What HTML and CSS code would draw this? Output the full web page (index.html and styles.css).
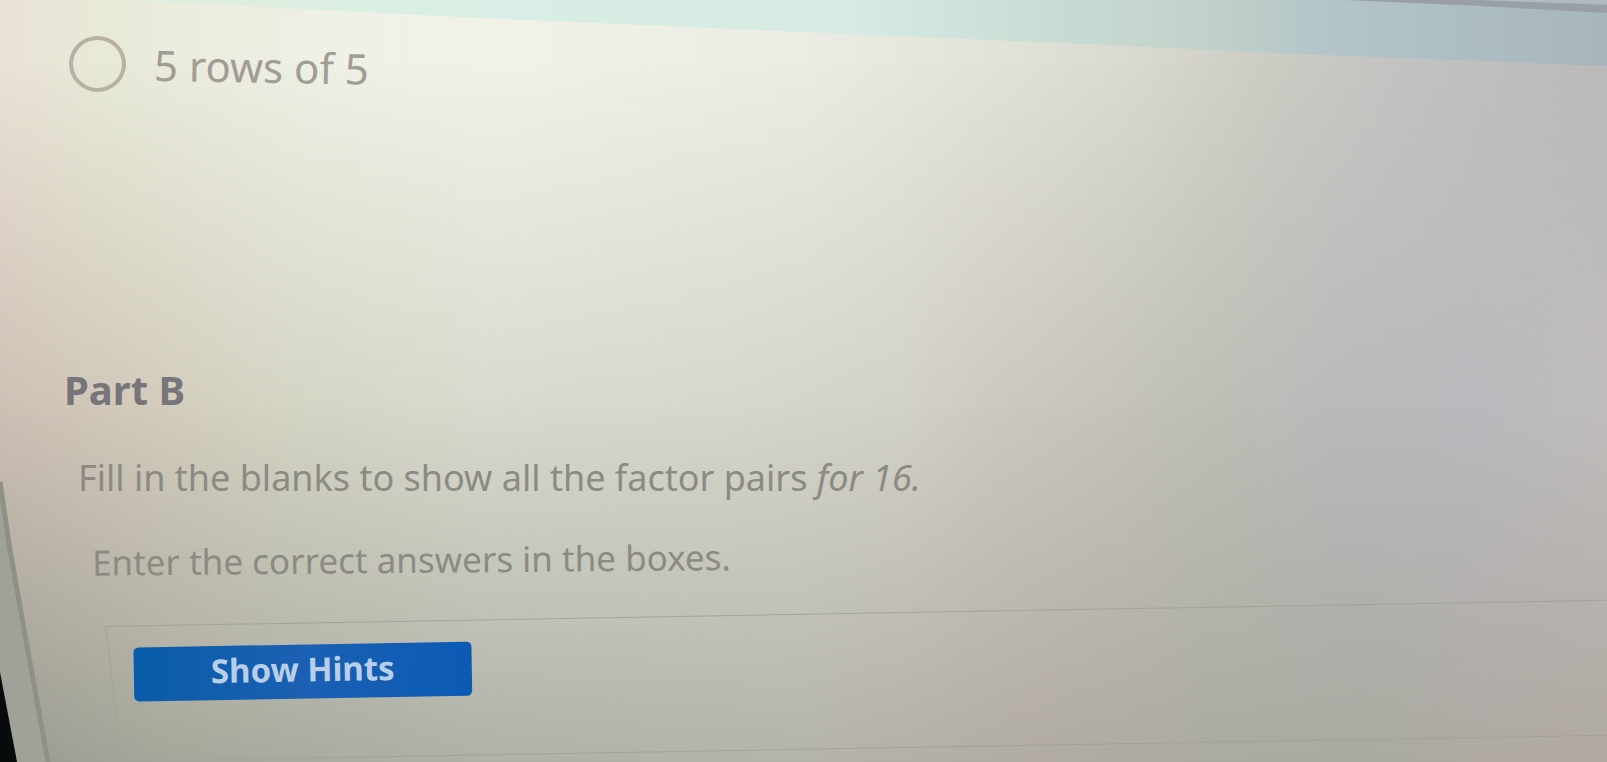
FILE: index.html
```html
<!DOCTYPE html>
<html lang="en">

<head>
    <meta charset="UTF-8" />
    <meta name="viewport" content="width=device-width, initial-scale=1.0">
    <title>Factor pairs</title>
    <link rel="stylesheet" href="styles.css">
</head>

<body>
    <main class="page">
        <!-- top band and screen edge -->
        <svg class="edges" viewBox="0 0 1607 762" preserveAspectRatio="none" aria-hidden="true">
            <defs>
                <linearGradient id="band" x1="0" x2="1" y1="0" y2="0">
                    <stop offset="0" stop-color="#e3ecdc" />
                    <stop offset="0.2" stop-color="#daefe4" />
                    <stop offset="0.5" stop-color="#d5ebe3" />
                    <stop offset="0.75" stop-color="#bfd0c8" />
                    <stop offset="0.8" stop-color="#b5c6ca" />
                    <stop offset="1" stop-color="#a6b6bb" />
                </linearGradient>
            </defs>
            <path d="M90 0H1607V66L1247 52L1107 45L480 18L240 6Z" fill="url(#band)" />
            <path d="M1345 0H1480L1607 5V13L1480 6Z" fill="#989fa8" />
            <path d="M1480 0H1607V4Z" fill="#b3b8c1" />
            <path d="M0 480L10 545L24 630L50 762H0Z" fill="#a0a198" />
            <path d="M0 482L10 550L25 635L48 762" fill="none" stroke="#8f9187" stroke-width="5" />
            <path d="M0 672L17 762H0Z" fill="#080b0b" />
        </svg>

        <label class="option">
            <input type="radio" name="rows">
            <span>5 rows of 5</span>
        </label>

        <section class="part">
            <h2>Part B</h2>
            <p class="question">Fill in the blanks to show all the factor pairs <em>for 16.</em></p>
            <p class="instruction">Enter the correct answers in the boxes.</p>
            <div class="panel">
                <button type="button">Show Hints</button>
            </div>
        </section>
    </main>
</body>

</html>
```

FILE: styles.css
```css
* {
    box-sizing: border-box;
}

body {
    margin: 0;
    font-family: 'Noto Sans', sans-serif;
    color: #8b8b83;
}

.page {
    position: relative;
    z-index: 0;
    min-height: 100vh;
    padding: 34px 0 0 64px;
    overflow: hidden;
    background: linear-gradient(90deg, #eae2d5 0%, #e8ead8 7%, #eff0e6 20%, #f1f1e8 32%, #ebece3 50%, #e1e2d8 62%, #dadad0 70%, #cbcac3 80%, #c3c2c2 88%, #bbb9b9 100%);
}

/* lower rows of the backdrop, faded into the one above */
.page::before,
.page::after {
    content: "";
    position: absolute;
    z-index: -1;
    inset: 0;
}

.page::before {
    background: linear-gradient(90deg, #ccc0b3 0%, #d2cbbb 10%, #d4d4c3 18%, #d8d9ce 30%, #d5d6cc 45%, #d2d1c7 56%, #cdc8bf 62%, #bebeb5 75%, #b9b9bb 83%, #b9b9bd 92%, #bfbcbb 100%);
    -webkit-mask-image: linear-gradient(transparent 8%, #000 54%);
    mask-image: linear-gradient(transparent 8%, #000 54%);
}

.page::after {
    background: linear-gradient(90deg, #999a91 0%, #a5a69b 10%, #afb0a6 30%, #b4b3a9 50%, #b1aba3 65%, #abaaa2 75%, #a8aaa0 85%, #afa9a2 92%, #b0a9a2 100%);
    -webkit-mask-image: linear-gradient(transparent 54%, #000 100%);
    mask-image: linear-gradient(transparent 54%, #000 100%);
}

.edges {
    position: absolute;
    z-index: 1;
    inset: 0;
    width: 100%;
    height: 100%;
    pointer-events: none;
}

.option {
    display: flex;
    align-items: center;
    gap: 28px;
    width: max-content;
    height: 64px;
    padding-left: 5px;
    font-size: 42px;
    line-height: 64px;
    color: #a19c94;
    transform: rotate(1deg);
}

.option input {
    appearance: none;
    width: 57px;
    height: 56px;
    margin: 0;
    border: 4px solid #b9b0a4;
    border-radius: 50%;
}

.option input:checked {
    background: #b9b0a4;
}

.part {
    padding-top: 268px;
}

h2 {
    margin: 0;
    font-size: 40px;
    line-height: 48px;
    font-weight: 700;
    color: #77757a;
}

p {
    width: max-content;
    margin: 0;
    font-size: 36px;
    line-height: 48px;
}

.question {
    margin-top: 40px;
    padding-left: 14px;
}

.instruction {
    margin-top: 34px;
    padding-left: 28px;
    font-size: 35px;
    transform: rotate(-0.5deg);
}

.panel {
    position: relative;
    height: 136px;
    margin: 42px -40px 0 41px;
    padding: 22px 28px;
    transform: rotate(-1deg);
    transform-origin: 0 0;
}

.panel::before {
    content: "";
    position: absolute;
    z-index: -1;
    inset: 0;
    border: 1px solid #a3a399;
    transform: skewX(6deg);
    transform-origin: 0 0;
}

button {
    width: 338px;
    height: 54px;
    padding: 0 6px 4px;
    border: none;
    border-radius: 5px;
    background: linear-gradient(90deg, #085ca8, #1b60b3 50%, #0b5ab4);
    color: #b9cfe9;
    font-family: inherit;
    font-size: 33px;
    font-weight: 700;
    line-height: 48px;
    cursor: pointer;
}
```
